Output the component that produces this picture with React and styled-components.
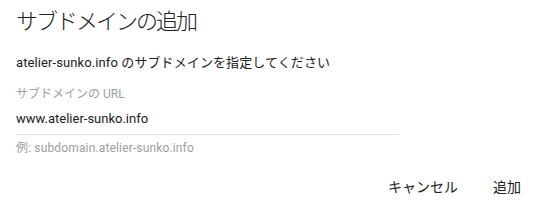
import React from "react";
import styled, { createGlobalStyle } from "styled-components";

const GlobalStyle = createGlobalStyle`
  body {
    margin: 0;
    background: #fff;
    font-family: Roboto, "Noto Sans CJK JP", sans-serif;
    color: #212121;
  }
`;

const Dialog = styled.div`
  width: 536px;
  height: 205px;
  box-sizing: border-box;
  padding: 7px 7px 7px 16px;
  display: flex;
  flex-direction: column;
  overflow: hidden;
`;

const Title = styled.h2`
  margin: 0;
  font-size: 22px;
  font-weight: 300;
  line-height: 30px;
  letter-spacing: -2px;
  color: #212121;
`;

const Message = styled.p`
  margin: 17px 0 0;
  font-size: 13px;
  line-height: 18px;
  letter-spacing: 0.1px;
`;

const Field = styled.div`
  width: 383px;
  margin-top: 14px;
  display: flex;
  flex-direction: column;
`;

const Label = styled.label`
  font-size: 12px;
  line-height: 16px;
  color: #9e9e9e;
`;

const Input = styled.input`
  border: none;
  border-bottom: 1px solid #e0e0e0;
  outline: none;
  padding: 8px 0 6px;
  margin: 0;
  font-family: inherit;
  font-size: 13px;
  line-height: 18px;
  color: #212121;
  background: transparent;
`;

const Hint = styled.div`
  margin-top: 5px;
  font-size: 12px;
  line-height: 16px;
  letter-spacing: 0.15px;
  color: #9e9e9e;
`;

const Actions = styled.div`
  margin-top: auto;
  display: flex;
  justify-content: flex-end;
  gap: 19px;
`;

const TextButton = styled.button`
  border: none;
  background: none;
  font-family: inherit;
  font-size: 14px;
  color: #212121;
  padding: 0 8px;
  height: 24px;
  cursor: pointer;
`;

export default function App() {
  return (
    <>
      <GlobalStyle />
      <Dialog>
        <Title>サブドメインの追加</Title>
        <Message>atelier-sunko.info のサブドメインを指定してください</Message>
        <Field>
          <Label>サブドメインの URL</Label>
          <Input defaultValue="www.atelier-sunko.info" />
          <Hint>例: subdomain.atelier-sunko.info</Hint>
        </Field>
        <Actions>
          <TextButton>キャンセル</TextButton>
          <TextButton>追加</TextButton>
        </Actions>
      </Dialog>
    </>
  );
}
